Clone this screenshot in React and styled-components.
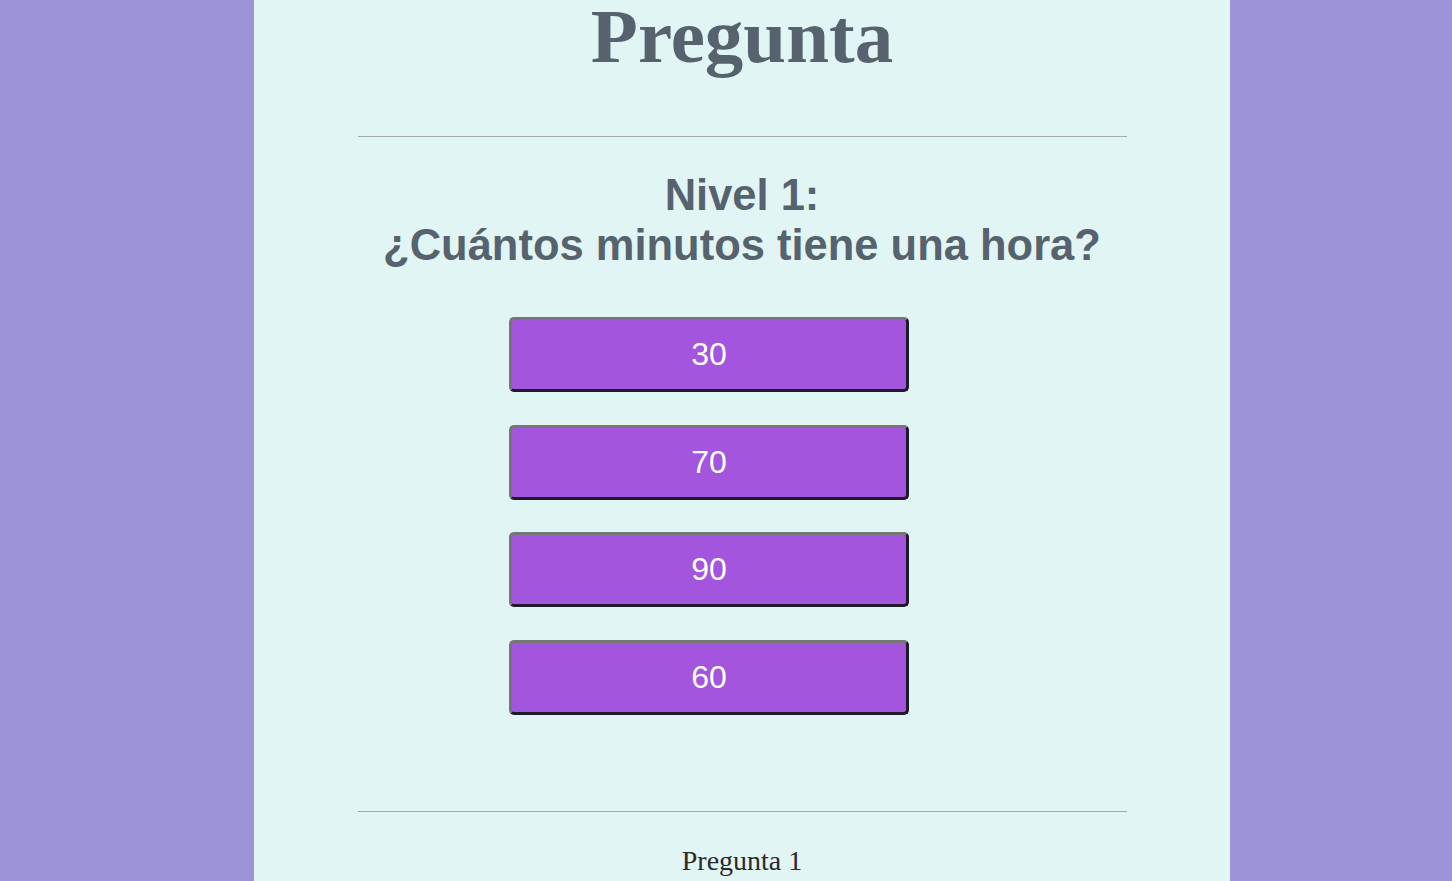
import React from 'react';
import styled, { createGlobalStyle } from 'styled-components';

const GlobalStyle = createGlobalStyle`
    html, body {
        margin: 0;
        padding: 0;
        background-color: #9c94d8;
    }
`

const options = ['30', '70', '90', '60'];

const App = () => {
    return (
        <>
            <GlobalStyle />
            <Panel>
                <Title>Pregunta</Title>
                <Rule />
                <Question>
                    Nivel 1:<br />
                    ¿Cuántos minutos tiene una hora?
                </Question>
                <Options>
                    {options.map((opt) => (
                        <OptionButton key={opt}>{opt}</OptionButton>
                    ))}
                </Options>
                <Rule bottom />
                <Footer>Pregunta 1</Footer>
            </Panel>
        </>
    );
}

const Panel = styled.div`
    display: flex;
    flex-direction: column;
    align-items: center;
    margin-left: 254px;
    width: 976px;
    min-height: 100vh;
    background-color: #e2f5f5;
    overflow: hidden;
`

const Title = styled.h1`
    margin: 0;
    font-family: "Liberation Serif", "Times New Roman", serif;
    font-size: 77px;
    font-weight: bold;
    line-height: 72px;
    color: #56636e;
    text-align: center;
`

const Rule = styled.hr`
    width: 769px;
    height: 0;
    border: none;
    border-top: 1px solid #a3a8aa;
    margin: ${props => props.bottom ? '96.5px 0 0 0' : '64px 0 0 0'};
`

const Question = styled.h2`
    margin: 33px 0 0 0;
    font-family: "Liberation Sans", Arial, sans-serif;
    font-size: 43.5px;
    font-weight: bold;
    line-height: 50px;
    color: #56636e;
    text-align: center;
`

const Options = styled.div`
    display: flex;
    flex-direction: column;
    gap: 32.5px;
    align-self: flex-start;
    margin-top: 47px;
    margin-left: 255px;
`

const OptionButton = styled.button`
    box-sizing: border-box;
    width: 400px;
    height: 75px;
    padding: 0;
    border-style: solid;
    border-width: 3px;
    border-color: #767676 #1e1a2a #1e1a2a #767676;
    border-radius: 5px;
    background-color: #a355dd;
    font-family: "Liberation Sans", Arial, sans-serif;
    font-size: 32px;
    color: #ffffff;
    cursor: pointer;
`

const Footer = styled.p`
    margin: 33px 0 0 0;
    font-family: "Liberation Serif", "Times New Roman", serif;
    font-size: 28px;
    line-height: normal;
    color: #2a2a2a;
    text-align: center;
`

export default App
